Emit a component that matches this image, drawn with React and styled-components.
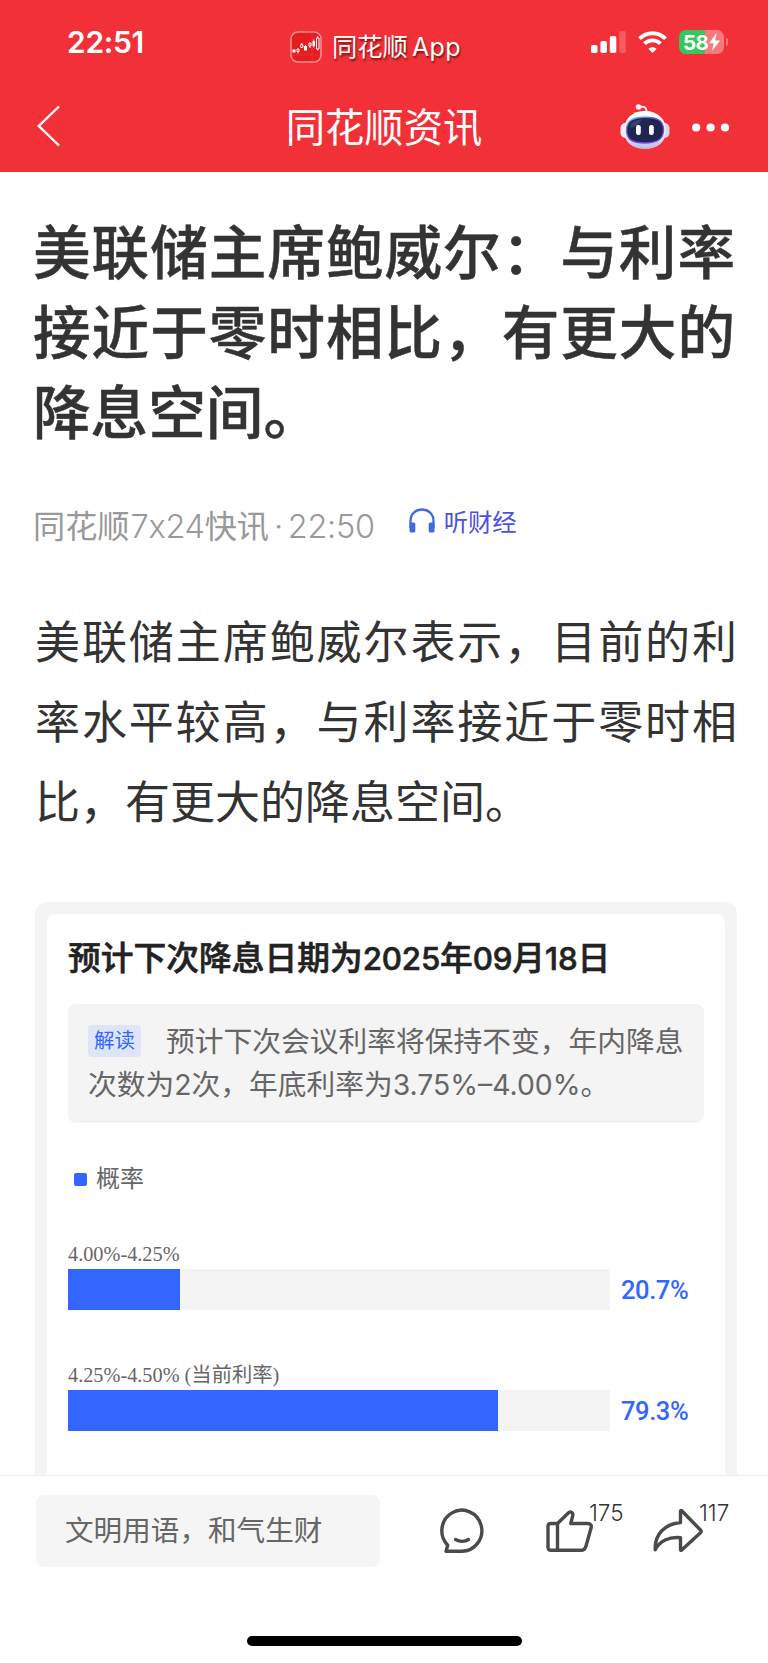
import React from "react";
import styled, { createGlobalStyle } from "styled-components";

const GlobalStyle = createGlobalStyle`
  * {
    box-sizing: border-box;
  }
  body {
    margin: 0;
    background: #fff;
    font-family: Inter, "Noto Sans CJK SC", sans-serif;
  }
  h1, h2, p {
    margin: 0;
  }
  svg {
    display: block;
    flex-shrink: 0;
  }
`;

const PageBlock = styled.div`
  width: 768px;
  height: 1663px;
  display: flex;
  flex-direction: column;
  overflow: hidden;
  background: #fff;
`;

const Header = styled.header`
  flex: none;
  height: 172px;
  background: #f23038;
  color: #fff;
`;

const StatusBar = styled.div`
  height: 84px;
  display: grid;
  grid-template-columns: 290px 1fr 177px;
  align-items: center;
`;

const Clock = styled.span`
  padding-left: 67px;
  font-size: 30px;
  font-weight: 600;
  letter-spacing: -0.3px;
  line-height: 84px;
`;

const AppBadge = styled.div`
  display: flex;
  align-items: center;
  gap: 10px;
  padding-top: 9px;
  font-size: 25.3px;
  line-height: 30px;
  text-shadow: 1px 2px 2px rgba(80, 0, 0, 0.7);
  .latin {
    margin-left: 4px;
    font-size: 25px;
    letter-spacing: 0.4px;
  }
`;

const StatusIcons = styled.div`
  display: flex;
  align-items: center;
  gap: 12px;
`;

const NavBar = styled.div`
  height: 88px;
  display: grid;
  grid-template-columns: 190px 1fr 190px;
  align-items: center;
  .back {
    padding: 0 0 5px 36px;
  }
  .actions {
    display: flex;
    align-items: center;
    gap: 22px;
    padding: 0 0 2px 42px;
  }
`;

const NavTitle = styled.h1`
  text-align: center;
  font-size: 39.3px;
  font-weight: 400;
  line-height: 56px;
  padding-bottom: 1px;
`;

const Article = styled.main`
  flex: 1;
  min-height: 0;
  overflow: hidden;
  padding: 41px 31px 0 35px;
`;

const Title = styled.h1`
  width: 702px;
  margin-left: -2px;
  color: #333;
  font-size: 57.6px;
  font-weight: 500;
  line-height: 80px;
  text-align: justify;
  -webkit-text-stroke: 0.5px #333;
`;

const Meta = styled.div`
  display: flex;
  align-items: center;
  height: 48px;
  margin: 47px 0 0 -2px;
  color: #999;
  font-size: 32.2px;
  white-space: nowrap;
  .number {
    margin-left: 1px;
    font-size: 32.5px;
    font-weight: 350;
    letter-spacing: -0.3px;
  }
  .time {
    margin-left: 5px;
    word-spacing: -4px;
  }
`;

const Listen = styled.span`
  display: flex;
  align-items: center;
  gap: 9px;
  margin: 0 0 8px 34px;
  color: #4b4fe6;
  font-size: 24.3px;
  font-weight: 400;
`;

const Body = styled.p`
  width: 702px;
  margin-top: 55px;
  color: #333;
  font-size: 45px;
  line-height: 80px;
  text-align: justify;
`;

const Card = styled.section`
  width: 702px;
  height: 640px;
  margin-top: 59px;
  padding: 12px 12px 0;
  border-radius: 12px;
  background: #f4f4f4;
`;

const CardInner = styled.div`
  height: 100%;
  padding: 20px 21px 0;
  border-radius: 9px;
  background: #fff;
`;

const CardTitle = styled.h2`
  color: #222;
  font-size: 32.75px;
  font-weight: 500;
  line-height: 48px;
  white-space: nowrap;
  -webkit-text-stroke: 0.6px #222;
  .number {
    font-size: 31.3px;
    letter-spacing: -0.2px;
  }
`;

const Note = styled.div`
  width: 636px;
  height: 119px;
  margin-top: 21px;
  padding: 16px 20px;
  border-radius: 8px;
  background: #f4f4f4;
  color: #666;
  font-size: 28.75px;
  line-height: 43.3px;
  white-space: nowrap;
  .number {
    font-size: 28.3px;
  }
`;

const Tag = styled.span`
  display: inline-block;
  width: 53px;
  height: 32px;
  margin-right: 25px;
  border-radius: 4px;
  background: #dfe5f8;
  color: #3366ff;
  font-size: 20.5px;
  line-height: 31px;
  text-align: center;
  vertical-align: 4px;
`;

const Legend = styled.div`
  display: flex;
  align-items: center;
  gap: 9px;
  height: 36px;
  margin: 38px 0 2px 6px;
  color: #666;
  font-size: 24px;
  line-height: 34px;
  &::before {
    content: "";
    width: 13px;
    height: 13px;
    border-radius: 2px;
    background: #3366ff;
  }
`;

const RateRow = styled.div`
  height: 121px;
  padding-top: 40px;
`;

const RateLabel = styled.div`
  height: 30px;
  color: #666;
  font-family: "Liberation Serif", "Noto Sans CJK SC", serif;
  font-size: 20.3px;
  line-height: 30px;
`;

const RateLine = styled.div`
  display: flex;
  align-items: center;
  gap: 11px;
  color: #3366ff;
  font-family: Roboto, sans-serif;
  font-size: 25.5px;
  font-weight: 500;
  line-height: 28px;
  letter-spacing: -0.4px;
`;

const Track = styled.div`
  width: 542px;
  height: 41px;
  background: #f4f4f4;
`;

const Fill = styled.div`
  height: 100%;
  background: #3366ff;
`;

const Footer = styled.footer`
  flex: none;
  height: 188px;
  display: flex;
  flex-direction: column;
  align-items: center;
  justify-content: space-between;
  padding-bottom: 17px;
  border-top: 1px solid #eee;
  background: #fff;
`;

const Toolbar = styled.div`
  width: 100%;
  display: flex;
  align-items: flex-start;
  padding: 19px 0 0 36px;
`;

const CommentInput = styled.div`
  width: 344px;
  height: 72px;
  margin-right: 60px;
  padding-left: 29px;
  border-radius: 8px;
  background: #f5f5f5;
  color: #666;
  font-size: 28.6px;
  line-height: 71px;
`;

const ToolButton = styled.div`
  display: flex;
  width: ${({ $width }) => $width}px;
  padding-top: 13px;
`;

const Count = styled.span`
  margin: -8px 0 0 -4px;
  color: #333;
  font-size: 22.5px;
  font-weight: 350;
  line-height: 26px;
`;

const HomeIndicator = styled.div`
  width: 275px;
  height: 10px;
  border-radius: 5px;
  background: #000;
`;

const AppLogo = () => (
  <svg width="32" height="32" viewBox="0 0 32 32" fill="none">
    <rect x="1" y="1" width="30" height="30" rx="7" fill="#e51c20" stroke="#f98a8d" strokeWidth="1.6" />
    <path d="M2 24h28M22 2v28" stroke="#ee3c40" strokeWidth=".6" />
    <path d="M2.500 18.500h3v3h-3zM14 15h3v4.500h-3zM22.500 10h2.500v5h-2.500z" fill="#fff" />
    <path d="M7 18h2v2.500h-2zM10.800 13.500h2v3h-2zM19 12h2v3h-2zM26.500 7h2.500v11h-2.500z" stroke="#fff" />
    <path d="M8 20v2.500M11.800 12v1.500M15.500 14v2M20 15v2M23.700 8.500v8M27.700 5v2M27.700 18v1.500" stroke="#fff" strokeWidth=".9" />
  </svg>
);

const SignalIcon = () => (
  <svg width="35" height="23" viewBox="0 0 35 23" fill="#fff">
    <rect x="0" y="14" width="6.500" height="8" rx="1.8" />
    <rect x="9.400" y="10" width="6.500" height="12" rx="1.8" />
    <rect x="18.800" y="5" width="6.500" height="17" rx="1.8" />
    <rect x="28.200" y="0" width="6.500" height="22" rx="1.8" opacity=".22" />
  </svg>
);

const WifiIcon = () => (
  <svg width="29" height="22" viewBox="0 0 29 22" fill="none" stroke="#fff">
    <path d="M1.500 7.600C8.800.3 20.200.3 27.500 7.600" strokeWidth="4" />
    <path d="M6.500 12.700c4.500-4.400 11.500-4.400 16 0" strokeWidth="3.900" />
    <path d="M14.500 22l-4.100-4.200c2.300-2.100 5.900-2.100 8.200 0z" fill="#fff" stroke="none" />
  </svg>
);

const BatteryBlock = styled.div`
  display: flex;
  align-items: center;
  gap: 2px;
  .cell {
    display: flex;
    align-items: center;
    width: 45px;
    height: 24px;
    padding-left: 4px;
    border-radius: 7px;
    background: linear-gradient(90deg, #34c759 58%, #f7797e 58%);
    font-size: 20.5px;
    font-weight: 700;
    letter-spacing: -0.6px;
  }
  .cap {
    width: 2px;
    height: 8px;
    border-radius: 0 2px 2px 0;
    background: #f7797e;
  }
`;

const Battery = () => (
  <BatteryBlock>
    <div className="cell">
      58
      <svg width="13" height="18" viewBox="0 0 13 18" fill="#fff">
        <path d="M8.700 0L1 10.200h4.600L4 18l8-10.500H7.200z" />
      </svg>
    </div>
    <div className="cap" />
  </BatteryBlock>
);

const BackIcon = () => (
  <svg width="24" height="42" viewBox="0 0 24 42" fill="none" stroke="#fff" strokeWidth="2.400">
    <path d="M23 1.500L2.800 21 23 40.500" />
  </svg>
);

const RobotIcon = () => (
  <svg width="50" height="47" viewBox="0 0 50 47" fill="none">
    <defs>
      <linearGradient id="shell" x1="0" y1="0" x2="0" y2="1">
        <stop offset="0" stopColor="#ffffff" />
        <stop offset=".6" stopColor="#eeeefb" />
        <stop offset="1" stopColor="#bdb9e6" />
      </linearGradient>
      <linearGradient id="rim" x1="0" y1="0" x2="1" y2="1">
        <stop offset="0" stopColor="#62c8dd" />
        <stop offset=".45" stopColor="#6a45d6" />
        <stop offset="1" stopColor="#8a4bf0" />
      </linearGradient>
    </defs>
    <path d="M19 3.300c5-1.300 7.300-.2 7.500 4" stroke="#f3e9f7" strokeWidth="2" />
    <circle cx="18.500" cy="3" r="2.800" fill="#f3f0fc" />
    <rect x=".5" y="19" width="10" height="15" rx="5" fill="#f0eefa" />
    <rect x="39.500" y="19" width="10" height="15" rx="5" fill="#d8d5f1" />
    <path d="M25 7c12.500 0 21 8 21 19.500S37.500 45 25 45 4 38.500 4 26.500 12.500 7 25 7z" fill="url(#shell)" />
    <path d="M25 13.200c13 0 18.500 3.800 18.500 12.800S38 39 25 39 6.500 35 6.500 26 12 13.200 25 13.200z" fill="#20264f" stroke="url(#rim)" strokeWidth="1.400" />
    <path d="M10 24c0-6 4-8 12-8.500-3 5-6 7.500-12 8.500z" fill="#36406d" />
    <rect x="16" y="21" width="4.800" height="10" rx="2.300" fill="#fff" />
    <rect x="29" y="21" width="4.800" height="10" rx="2.300" fill="#fff" />
  </svg>
);

const MoreIcon = () => (
  <svg width="38" height="9" viewBox="0 0 38 9" fill="#fff">
    <circle cx="4.200" cy="4.500" r="4.100" />
    <circle cx="18.600" cy="4.500" r="4.100" />
    <circle cx="33" cy="4.500" r="4.100" />
  </svg>
);

const HeadphoneIcon = () => (
  <svg width="26" height="25" viewBox="0 0 26 25" fill="none">
    <path d="M1.500 20v-7C1.500 6 6.500 1.500 13 1.500S24.500 6 24.500 13v7" stroke="#4169e1" strokeWidth="2.300" />
    <rect x=".5" y="14.500" width="5.800" height="10" rx="1.500" fill="#4169e1" />
    <rect x="19.700" y="14.500" width="5.800" height="10" rx="1.500" fill="#4169e1" />
  </svg>
);

const lineIcon = {
  fill: "none",
  stroke: "#4a4a4a",
  strokeWidth: 3.4,
  strokeLinecap: "round",
  strokeLinejoin: "round",
};

const CommentIcon = () => (
  <svg width="44" height="46" viewBox="0 0 44 46" {...lineIcon}>
    <path d="M6 43.200H21.500A20 20.500 0 1 0 7.700 37.200z" />
    <path d="M15.500 31.500c4 2.300 9.500 2.300 13 0" />
  </svg>
);

const LikeIcon = () => (
  <svg width="47" height="46" viewBox="0 0 47 46" {...lineIcon}>
    <path d="M11.500 15.500L22 5.200c2.700-2.600 5.500-.3 4.700 2.600l-1.900 7.700h17c2.800 0 4 1.800 3.300 4.200l-5 18c-.9 3-2.300 4.600-5.200 4.600H5c-2 0-3-1-3-3V18.500c0-2 1-3 3-3z" />
    <path d="M11.500 15.500v26.800" />
  </svg>
);

const ShareIcon = () => (
  <svg width="50" height="46" viewBox="0 0 50 46" {...lineIcon}>
    <path d="M27.500 3.300c0-.8.600-1 1.200-.5L47.500 22c1 1 1 1.800 0 2.700L28.700 42c-.6.600-1.200.4-1.200-.4V29.700C16 28.500 6.500 33 2.200 41.800 1.500 26 12 16 27.500 14.500z" />
  </svg>
);

const rates = [
  { label: "4.00%-4.25%", value: 20.7 },
  { label: "4.25%-4.50% (当前利率)", value: 79.3 },
];

const App = () => {
  return (
    <PageBlock>
      <GlobalStyle />
      <Header>
        <StatusBar>
          <Clock>22:51</Clock>
          <AppBadge>
            <AppLogo />
            <span>
              同花顺<span className="latin">App</span>
            </span>
          </AppBadge>
          <StatusIcons>
            <SignalIcon />
            <WifiIcon />
            <Battery />
          </StatusIcons>
        </StatusBar>
        <NavBar>
          <div className="back">
            <BackIcon />
          </div>
          <NavTitle>同花顺资讯</NavTitle>
          <div className="actions">
            <RobotIcon />
            <MoreIcon />
          </div>
        </NavBar>
      </Header>
      <Article>
        <Title>美联储主席鲍威尔：与利率接近于零时相比，有更大的降息空间。</Title>
        <Meta>
          <span>
            同花顺<span className="number">7x24</span>快讯
            <span className="number time">· 22:50</span>
          </span>
          <Listen>
            <HeadphoneIcon />
            听财经
          </Listen>
        </Meta>
        <Body>
          美联储主席鲍威尔表示，目前的利率水平较高，与利率接近于零时相比，有更大的降息空间。
        </Body>
        <Card>
          <CardInner>
            <CardTitle>
              预计下次降息日期为<span className="number">2025</span>年
              <span className="number">09</span>月
              <span className="number">18</span>日
            </CardTitle>
            <Note>
              <Tag>解读</Tag>预计下次会议利率将保持不变，年内降息
              <br />
              次数为<span className="number">2</span>次，年底利率为
              <span className="number">3.75%–4.00%</span>。
            </Note>
            <Legend>概率</Legend>
            {rates.map((rate) => (
              <RateRow key={rate.label}>
                <RateLabel>{rate.label}</RateLabel>
                <RateLine>
                  <Track>
                    <Fill style={{ width: `${rate.value}%` }} />
                  </Track>
                  {rate.value}%
                </RateLine>
              </RateRow>
            ))}
          </CardInner>
        </Card>
      </Article>
      <Footer>
        <Toolbar>
          <CommentInput>文明用语，和气生财</CommentInput>
          <ToolButton $width={106}>
            <CommentIcon />
          </ToolButton>
          <ToolButton $width={107}>
            <LikeIcon />
            <Count>175</Count>
          </ToolButton>
          <ToolButton $width={90}>
            <ShareIcon />
            <Count>117</Count>
          </ToolButton>
        </Toolbar>
        <HomeIndicator />
      </Footer>
    </PageBlock>
  );
};

export default App;
